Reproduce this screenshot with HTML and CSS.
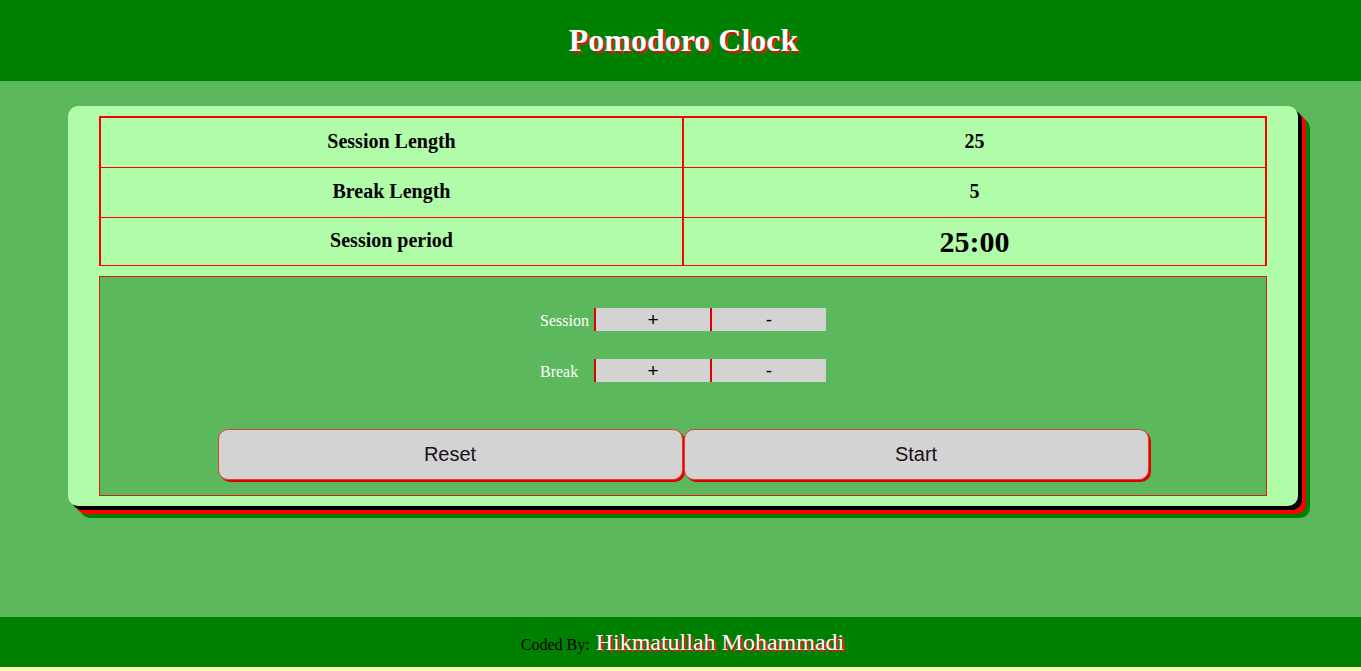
FILE: index.html
```html
<!DOCTYPE html>
<html lang="en">
<head>
<meta charset="utf-8">
<title>Pomodoro Clock</title>
<link rel="stylesheet" href="styles.css">
</head>
<body>
<header class="top">
  <h1 class="title">Pomodoro Clock</h1>
</header>
<main class="main">
  <section class="card">
    <div class="info">
      <div class="cell key">Session Length</div><div class="cell val">25</div>
      <div class="cell key">Break Length</div><div class="cell val">5</div>
      <div class="cell key last">Session period</div><div class="cell val last timer">25:00</div>
    </div>
    <div class="panel">
      <div class="ctrl-row">
        <span class="ctrl-label">Session</span>
        <button class="ctrl-btn">+</button><button class="ctrl-btn">-</button>
      </div>
      <div class="ctrl-row">
        <span class="ctrl-label">Break</span>
        <button class="ctrl-btn">+</button><button class="ctrl-btn">-</button>
      </div>
      <div class="actions">
        <button class="act-btn">Reset</button>
        <button class="act-btn">Start</button>
      </div>
    </div>
  </section>
</main>
<footer class="foot">
  <span class="coded">Coded By:</span> <span class="author">Hikmatullah Mohammadi</span>
</footer>
</body>
</html>
```
FILE: styles.css
```css
html, body {
  margin: 0;
  padding: 0;
}
body {
  background: #fbfbb8;
  font-family: "Liberation Serif", "Times New Roman", serif;
}
.top {
  height: 81px;
  background: #008000;
  display: flex;
  align-items: center;
  justify-content: center;
}
.title {
  margin: 0;
  font-size: 32px;
  font-weight: bold;
  color: #ffffff;
  text-shadow: 2px 2px 0 #e01010;
  position: relative;
  left: 3px;
}
.main {
  height: 536px;
  background: #5cb85c;
  padding-top: 25px;
  box-sizing: border-box;
}
.card {
  margin-left: 68px;
  width: 1230px;
  box-sizing: border-box;
  background: #b0fca8;
  border-radius: 10px;
  padding: 10px 31px 10px 31px;
  box-shadow: 4px 4px 0 #000000, 8px 8px 0 #ff0000, 12px 12px 0 #008000;
}
.info {
  width: 1168px;
  box-sizing: border-box;
  display: grid;
  grid-template-columns: 583px 1fr;
  border: 2px solid #ff0000;
  border-bottom: none;
}
.cell {
  height: 50px;
  box-sizing: border-box;
  border-bottom: 1px solid #ff0000;
  display: flex;
  align-items: center;
  justify-content: center;
  padding-bottom: 4px;
  font-size: 20px;
  line-height: 22px;
  font-weight: bold;
  color: #000;
}
.cell.key {
  border-right: 2px solid #ff0000;
}
.cell.last {
  height: 48px;
  padding-bottom: 3px;
}
.cell.timer {
  font-size: 30px;
  line-height: 30px;
  padding-bottom: 0;
}
.panel {
  margin-top: 10px;
  height: 220px;
  box-sizing: border-box;
  border: 1px solid #d02010;
  background: #5cb85c;
  padding-top: 31px;
  display: flex;
  flex-direction: column;
  align-items: center;
}
.ctrl-row {
  display: flex;
  align-items: center;
  height: 23px;
  margin-bottom: 28px;
}
.ctrl-label {
  width: 54px;
  color: #ffffff;
  font-size: 16px;
  line-height: 23px;
  padding-top: 1px;
}
.ctrl-btn {
  width: 116px;
  height: 23px;
  margin: 0;
  padding: 0;
  border: none;
  border-left: 2px solid #e00000;
  background: #d3d3d3;
  font-family: "Liberation Sans", Arial, sans-serif;
  font-size: 19px;
  color: #000;
  line-height: 21px;
}
.actions {
  margin-top: 19px;
  display: flex;
  gap: 1px;
}
.act-btn {
  width: 465px;
  height: 51px;
  margin: 0;
  border: 1px solid #e04030;
  border-radius: 10px;
  background: #d3d3d3;
  box-shadow: 2px 2px 0 #e00000;
  font-family: "Liberation Sans", Arial, sans-serif;
  font-size: 20px;
  color: #1a1020;
}
.foot {
  height: 50px;
  background: #008000;
  display: flex;
  align-items: center;
  justify-content: center;
  gap: 6px;
}
.coded {
  font-size: 16px;
  color: #000;
  padding-top: 5px;
  position: relative;
  left: 2px;
}
.author {
  font-size: 24px;
  color: #ffffff;
  text-shadow: 2px 2px 0 #c82010;
  position: relative;
  left: 2px;
}
```
